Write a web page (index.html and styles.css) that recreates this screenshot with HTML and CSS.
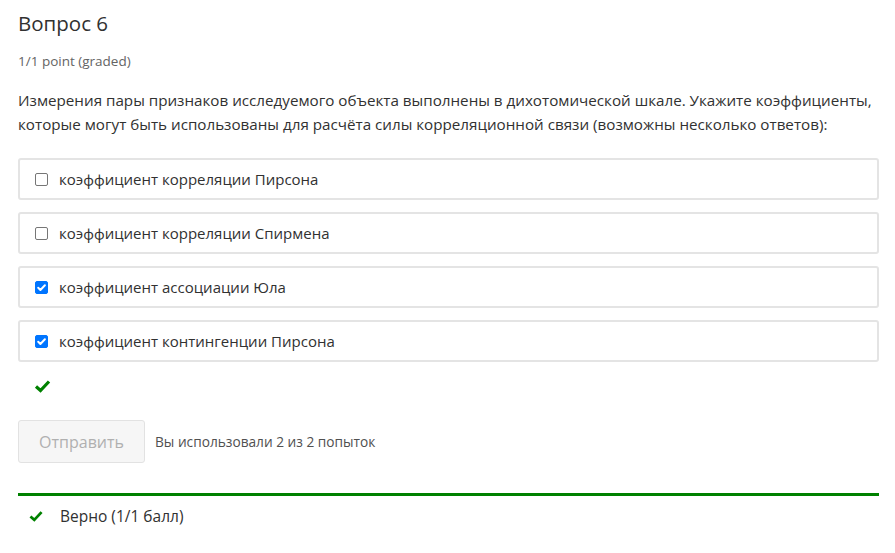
FILE: index.html
```html
<!DOCTYPE html>
<html lang="ru">
<head>
<meta charset="utf-8">
<link rel="stylesheet" href="styles.css">
</head>
<body>
<div class="problem">
  <h3 class="title">Вопрос 6</h3>
  <div class="points">1/1 point (graded)</div>
  <p class="question">Измерения пары признаков исследуемого объекта выполнены в дихотомической шкале. Укажите коэффициенты, которые могут быть использованы для расчёта силы корреляционной связи (возможны несколько ответов):</p>
  <div class="choices">
    <label class="choice"><span class="box"></span><span>коэффициент корреляции Пирсона</span></label>
    <label class="choice"><span class="box"></span><span>коэффициент корреляции Спирмена</span></label>
    <label class="choice"><span class="box checked"><svg viewBox="0 0 13 13" width="13" height="13"><path d="M3.2 6.8 L5.4 9 L9.9 4.3" fill="none" stroke="#fff" stroke-width="2" stroke-linecap="round" stroke-linejoin="round"/></svg></span><span>коэффициент ассоциации Юла</span></label>
    <label class="choice"><span class="box checked"><svg viewBox="0 0 13 13" width="13" height="13"><path d="M3.2 6.8 L5.4 9 L9.9 4.3" fill="none" stroke="#fff" stroke-width="2" stroke-linecap="round" stroke-linejoin="round"/></svg></span><span>коэффициент контингенции Пирсона</span></label>
  </div>
  <div class="status"><svg viewBox="0 0 16 14" width="17" height="14"><path d="M1.5 7.5 L6 11.5 L14.5 2.5" fill="none" stroke="#008100" stroke-width="3.2" stroke-linejoin="miter"/></svg></div>
  <div class="actions">
    <button class="submit" disabled>Отправить</button>
    <span class="attempts">Вы использовали 2 из 2 попыток</span>
  </div>
  <div class="notification">
    <svg class="ncheck" viewBox="0 0 16 14" width="14" height="12"><path d="M1.5 7.5 L6 11.5 L14.5 2.5" fill="none" stroke="#008100" stroke-width="3.2"/></svg>
    <span>Верно (1/1 балл)</span>
  </div>
</div>
</body>
</html>
```
FILE: styles.css
```css
html, body {
  margin: 0;
  padding: 0;
  background: #fff;
}
body {
  font-family: "Open Sans", "Noto Sans", sans-serif;
  color: #313131;
}
.problem {
  padding: 0 16px 0 18px;
}
.title {
  margin: 0;
  padding-top: 8px;
  font-size: 20.5px;
  font-weight: 400;
  line-height: 30px;
  color: #313131;
}
.points {
  margin-top: 14px;
  font-size: 13.5px;
  line-height: 18px;
  color: #646464;
}
.question {
  margin: 18px 0 0;
  font-size: 15.2px;
  line-height: 24px;
  color: #313131;
}
.choices {
  margin-top: 22px;
  display: flex;
  flex-direction: column;
  gap: 12px;
}
.choice {
  display: flex;
  align-items: center;
  height: 42px;
  box-sizing: border-box;
  border: 2px solid #e4e4e4;
  border-radius: 3px;
  padding-left: 15px;
  font-size: 15px;
  color: #313131;
}
.box {
  width: 13px;
  height: 13px;
  box-sizing: border-box;
  border: 1px solid #767676;
  border-radius: 2px;
  margin-right: 11px;
  display: flex;
  flex-shrink: 0;
}
.box.checked {
  background: #0075ff;
  border-color: #0075ff;
}
.box.checked svg {
  margin: -1px;
}
.status {
  margin-top: 14px;
  padding-left: 16px;
  height: 18px;
}
.actions {
  margin-top: 26px;
  display: flex;
  align-items: center;
}
.submit {
  width: 127px;
  height: 43px;
  background: #f6f6f6;
  border: 1px solid #e2e2e2;
  border-radius: 3px;
  font-family: "Open Sans", sans-serif;
  font-size: 16px;
  color: #b0b0b0;
  padding: 0;
}
.attempts {
  margin-left: 10px;
  font-size: 13.7px;
  color: #505050;
}
.notification {
  margin-top: 30px;
  border-top: 3px solid #008100;
  display: flex;
  align-items: center;
  padding: 9px 0 0 11px;
  font-size: 15.5px;
  color: #313131;
}
.ncheck {
  margin-right: 17px;
}
```
